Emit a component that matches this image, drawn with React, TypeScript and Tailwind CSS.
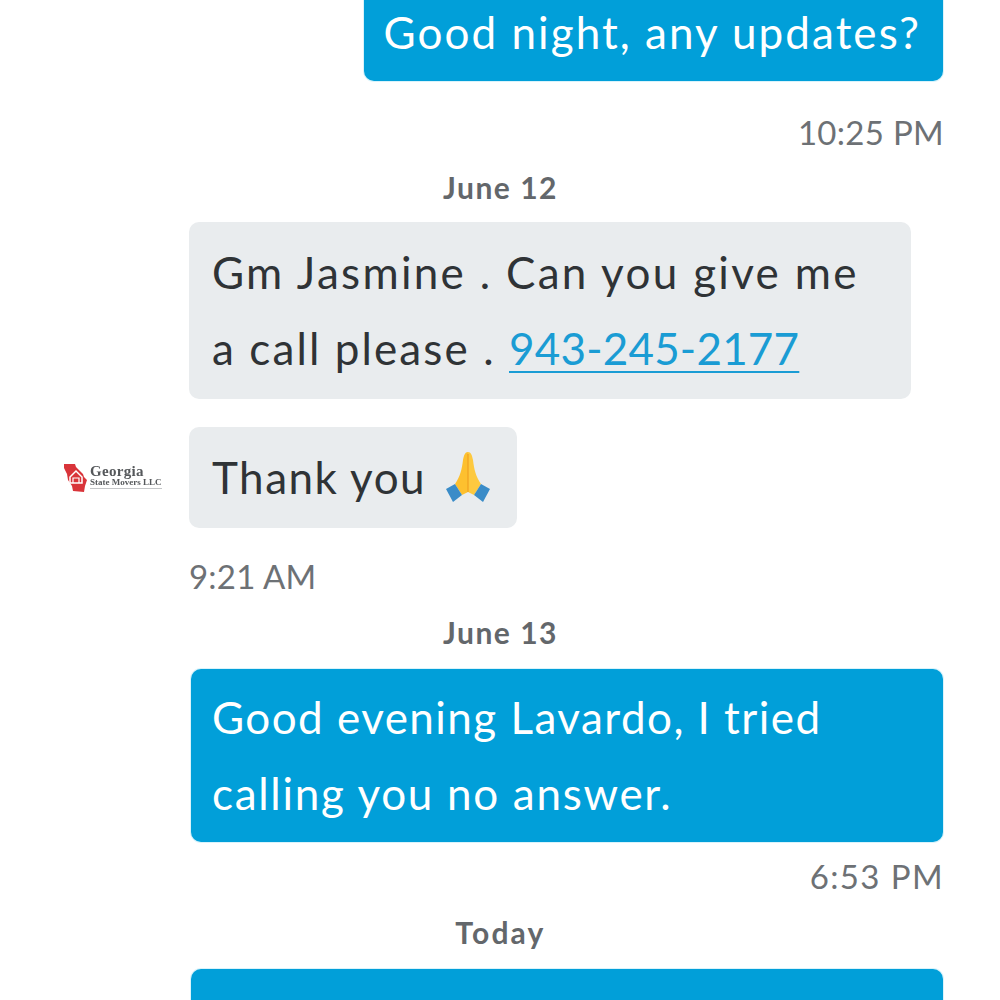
const FONT = "font-['Lato',sans-serif]";

function DateLabel({ children, wide }: { children: string; wide?: boolean }) {
  return (
    <div className={`text-center text-[30px] leading-[36px] font-bold text-[#63676b] pr-[6px] ${wide ? "tracking-[2.2px]" : "tracking-[1.5px]"}`}>
      {children}
    </div>
  );
}

function Time({ children, className }: { children: string; className: string }) {
  return <div className={`text-[33px] leading-[40px] text-[#6d7175] ${className}`}>{children}</div>;
}

function Logo() {
  return (
    <div className="w-[100px] flex items-center gap-[2px] shrink-0 blur-[0.4px]">
      <svg width="24" height="30" viewBox="0 0 24 30">
        <path d="M0 1h11l1 3 7 7 1 3 3 3-2 6-1 6-11-1-1-5-4-6-1-6-3-6z" fill="#d9343a" />
        <path d="M6 14l6-6 6 6v6H6z" fill="none" stroke="#fff" strokeWidth="1.5" />
        <path d="M9 20v-5h6v5" fill="none" stroke="#fff" strokeWidth="1.2" />
      </svg>
      <div className="font-['Liberation_Serif',serif] font-bold text-[#55585b] mt-[-1px]">
        <div className="text-[15px] leading-[13px] tracking-[0.3px]">Georgia</div>
        <div className="text-[9px] leading-[9px] whitespace-nowrap">State Movers LLC</div>
        <div className="h-[1px] mt-[1px] bg-[#c4c6c8]" />
      </div>
    </div>
  );
}

function PrayingHands() {
  return (
    <svg width="44" height="50" viewBox="0 0 44 50" className="inline-block align-[-8px] ml-[7px]">
      <path d="M22 0c-3 0-4 3-5 8-1 9-3 17-8 24l7 11 6-3z" fill="#fdc02f" />
      <path d="M22 0c3 0 4 3 5 8 1 9 3 17 8 24l-7 11-6-3z" fill="#fdc93f" />
      <path d="M22 2v38" stroke="#f0a020" strokeWidth="1.2" />
      <path d="M0 37l9-5 7 11-9 7z" fill="#3a8cc8" />
      <path d="M44 37l-9-5-7 11 9 7z" fill="#3a8cc8" />
    </svg>
  );
}

export default function App() {
  return (
    <div className={`${FONT} h-[1000px] w-[1000px] overflow-hidden bg-white`}>
      <div className="mt-[-30px] pl-[64px] pr-[57px] flex flex-col">
        <div className="self-end bg-[#019fd9] text-white text-[44px] tracking-[2.05px] leading-[76px] rounded-[10px] shadow-[0_0_0_1px_#d9f3fb] pl-[20px] pr-[22px] pt-[24px] pb-[11px]">
          Good night, any updates?
        </div>
        <Time className="self-end tracking-[0.3px] mr-[-1px] mt-[31px]">10:25 PM</Time>
        <div className="mt-[17px]"><DateLabel>June 12</DateLabel></div>

        <div className="ml-[125px] mr-[32px] mt-[17px] bg-[#e9ecee] text-[#2f3336] text-[44px] tracking-[2.3px] leading-[76px] rounded-[10px] px-[23px] pt-[12px] pb-[13px]">
          Gm Jasmine . Can you give me
          <br />
          <span className="tracking-[2.1px]">a call please . </span>
          <span className="text-[#1a9cd4] tracking-[0.2px] underline underline-offset-[6px] decoration-2">943-245-2177</span>
        </div>

        <div className="flex items-center mt-[28px] gap-[25px]">
          <Logo />
          <div className="bg-[#e9ecee] text-[#2f3336] text-[44px] tracking-[1.5px] leading-[76px] rounded-[10px] pl-[23px] pr-[27px] pt-[12px] pb-[13px] whitespace-nowrap">
            Thank you <PrayingHands />
          </div>
        </div>

        <Time className="ml-[125px] tracking-[0.2px] mt-[28px]">9:21 AM</Time>
        <div className="mt-[18px]"><DateLabel>June 13</DateLabel></div>

        <div className="ml-[127px] mt-[19px] bg-[#019fd9] text-white text-[44px] tracking-[1.45px] leading-[76px] rounded-[10px] shadow-[0_0_0_1px_#d9f3fb] px-[21px] pt-[10px] pb-[11px]">
          Good evening Lavardo, I tried
          <br />
          <span className="tracking-[1.7px]">calling you no answer.</span>
        </div>

        <Time className="self-end tracking-[1.4px] mr-[-1px] mt-[14px]">6:53 PM</Time>
        <div className="mt-[18px]"><DateLabel wide>Today</DateLabel></div>

        <div className="ml-[127px] mt-[19px] h-[100px] bg-[#019fd9] rounded-[10px] shadow-[0_0_0_1px_#d9f3fb]" />
      </div>
    </div>
  );
}
